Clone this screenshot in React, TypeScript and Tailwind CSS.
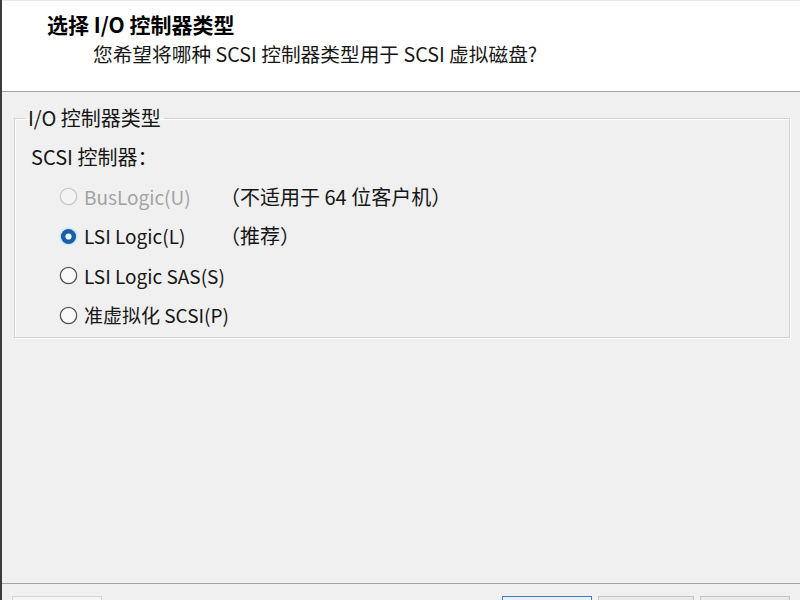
import React from 'react';

type Kind = 'off' | 'on' | 'disabled';

const Radio: React.FC<{ kind: Kind }> = ({ kind }) => {
  if (kind === 'on') {
    return (
      <svg width="19" height="19" viewBox="0 0 19 19" className="shrink-0">
        <circle cx="9.5" cy="9.5" r="9.4" fill="#d3eafb" />
        <circle cx="9.5" cy="9.5" r="7.6" fill="#1b5ea6" />
        <circle cx="9.5" cy="9.5" r="3.1" fill="#eef8ff" />
      </svg>
    );
  }
  const stroke = kind === 'disabled' ? '#c9c9c9' : '#555555';
  const fill = kind === 'disabled' ? '#f3f3f3' : '#fafafa';
  return (
    <svg width="19" height="19" viewBox="0 0 19 19" className="shrink-0">
      <circle cx="9.5" cy="9.5" r="8.2" fill={fill} stroke={stroke} strokeWidth="1.3" />
    </svg>
  );
};

const options: { label: string; note?: string; kind: Kind }[] = [
  { label: 'BusLogic(U)', note: '（不适用于 64 位客户机）', kind: 'disabled' },
  { label: 'LSI Logic(L)', note: '（推荐）', kind: 'on' },
  { label: 'LSI Logic SAS(S)', kind: 'off' },
  { label: '准虚拟化 SCSI(P)', kind: 'off' },
];

export default function App() {
  return (
    <div className="w-[800px] h-[600px] overflow-hidden flex flex-col bg-[#f0f0f0] border-l-2 border-[#3c3c3c] text-[#161616] font-['Noto_Sans_CJK_SC','Noto_Sans',sans-serif]">
      {/* Wizard header */}
      <header className="h-[92px] shrink-0 bg-white border-t border-t-[#e6e6e6] border-b border-b-[#a3a3a3]">
        <div className="pl-[45px] pt-[9px] text-[21px] leading-[28px] font-bold text-black">
          选择 I/O 控制器类型
        </div>
        <div className="pl-[91px] mt-[2px] text-[19.7px] leading-[28px]">
          您希望将哪种 SCSI 控制器类型用于 SCSI 虚拟磁盘?
        </div>
      </header>

      {/* Body */}
      <main className="flex-1 pl-[12px] pt-[14px]">
        <fieldset className="w-[776px] border border-[#d2d2d2] shadow-[inset_1px_1px_0_#ffffff,1px_1px_0_#ffffff]">
          <legend className="ml-[10px] px-[3px] text-[20px] leading-[24px]">I/O 控制器类型</legend>
          <div className="flex flex-col pl-[16px] pt-[13px] pb-[2px]">
            <div className="h-[28px] leading-[28px] text-[20px] mb-[6px]">SCSI 控制器：</div>
            {options.map((o) => (
              <div key={o.label} className="h-[39.5px] flex items-center pl-[28px] text-[19px]">
                <Radio kind={o.kind} />
                <span
                  className={`ml-[6px] w-[148px] shrink-0 whitespace-nowrap ${
                    o.kind === 'disabled' ? 'text-[#a3a3a3]' : ''
                  }`}
                >
                  {o.label}
                </span>
                {o.note && <span className="whitespace-nowrap -ml-[12px] text-[20px]">{o.note}</span>}
              </div>
            ))}
          </div>
        </fieldset>
      </main>

      {/* Button bar, mostly cut off */}
      <footer className="h-[17px] shrink-0 border-t border-[#a3a3a3] flex items-start gap-[6px] pt-[12px] pl-[10px]">
        <div className="w-[90px] h-[28px] border border-[#d6d6d6] bg-[#f5f5f5]" />
        <div className="ml-auto w-[90px] h-[28px] border border-[#3f7fc4] bg-[#e8f0f8]" />
        <div className="w-[96px] h-[28px] border border-[#c4c4c4] bg-[#eaeaea]" />
        <div className="w-[90px] h-[28px] border border-[#c4c4c4] bg-[#eaeaea] mr-[10px]" />
      </footer>
    </div>
  );
}
